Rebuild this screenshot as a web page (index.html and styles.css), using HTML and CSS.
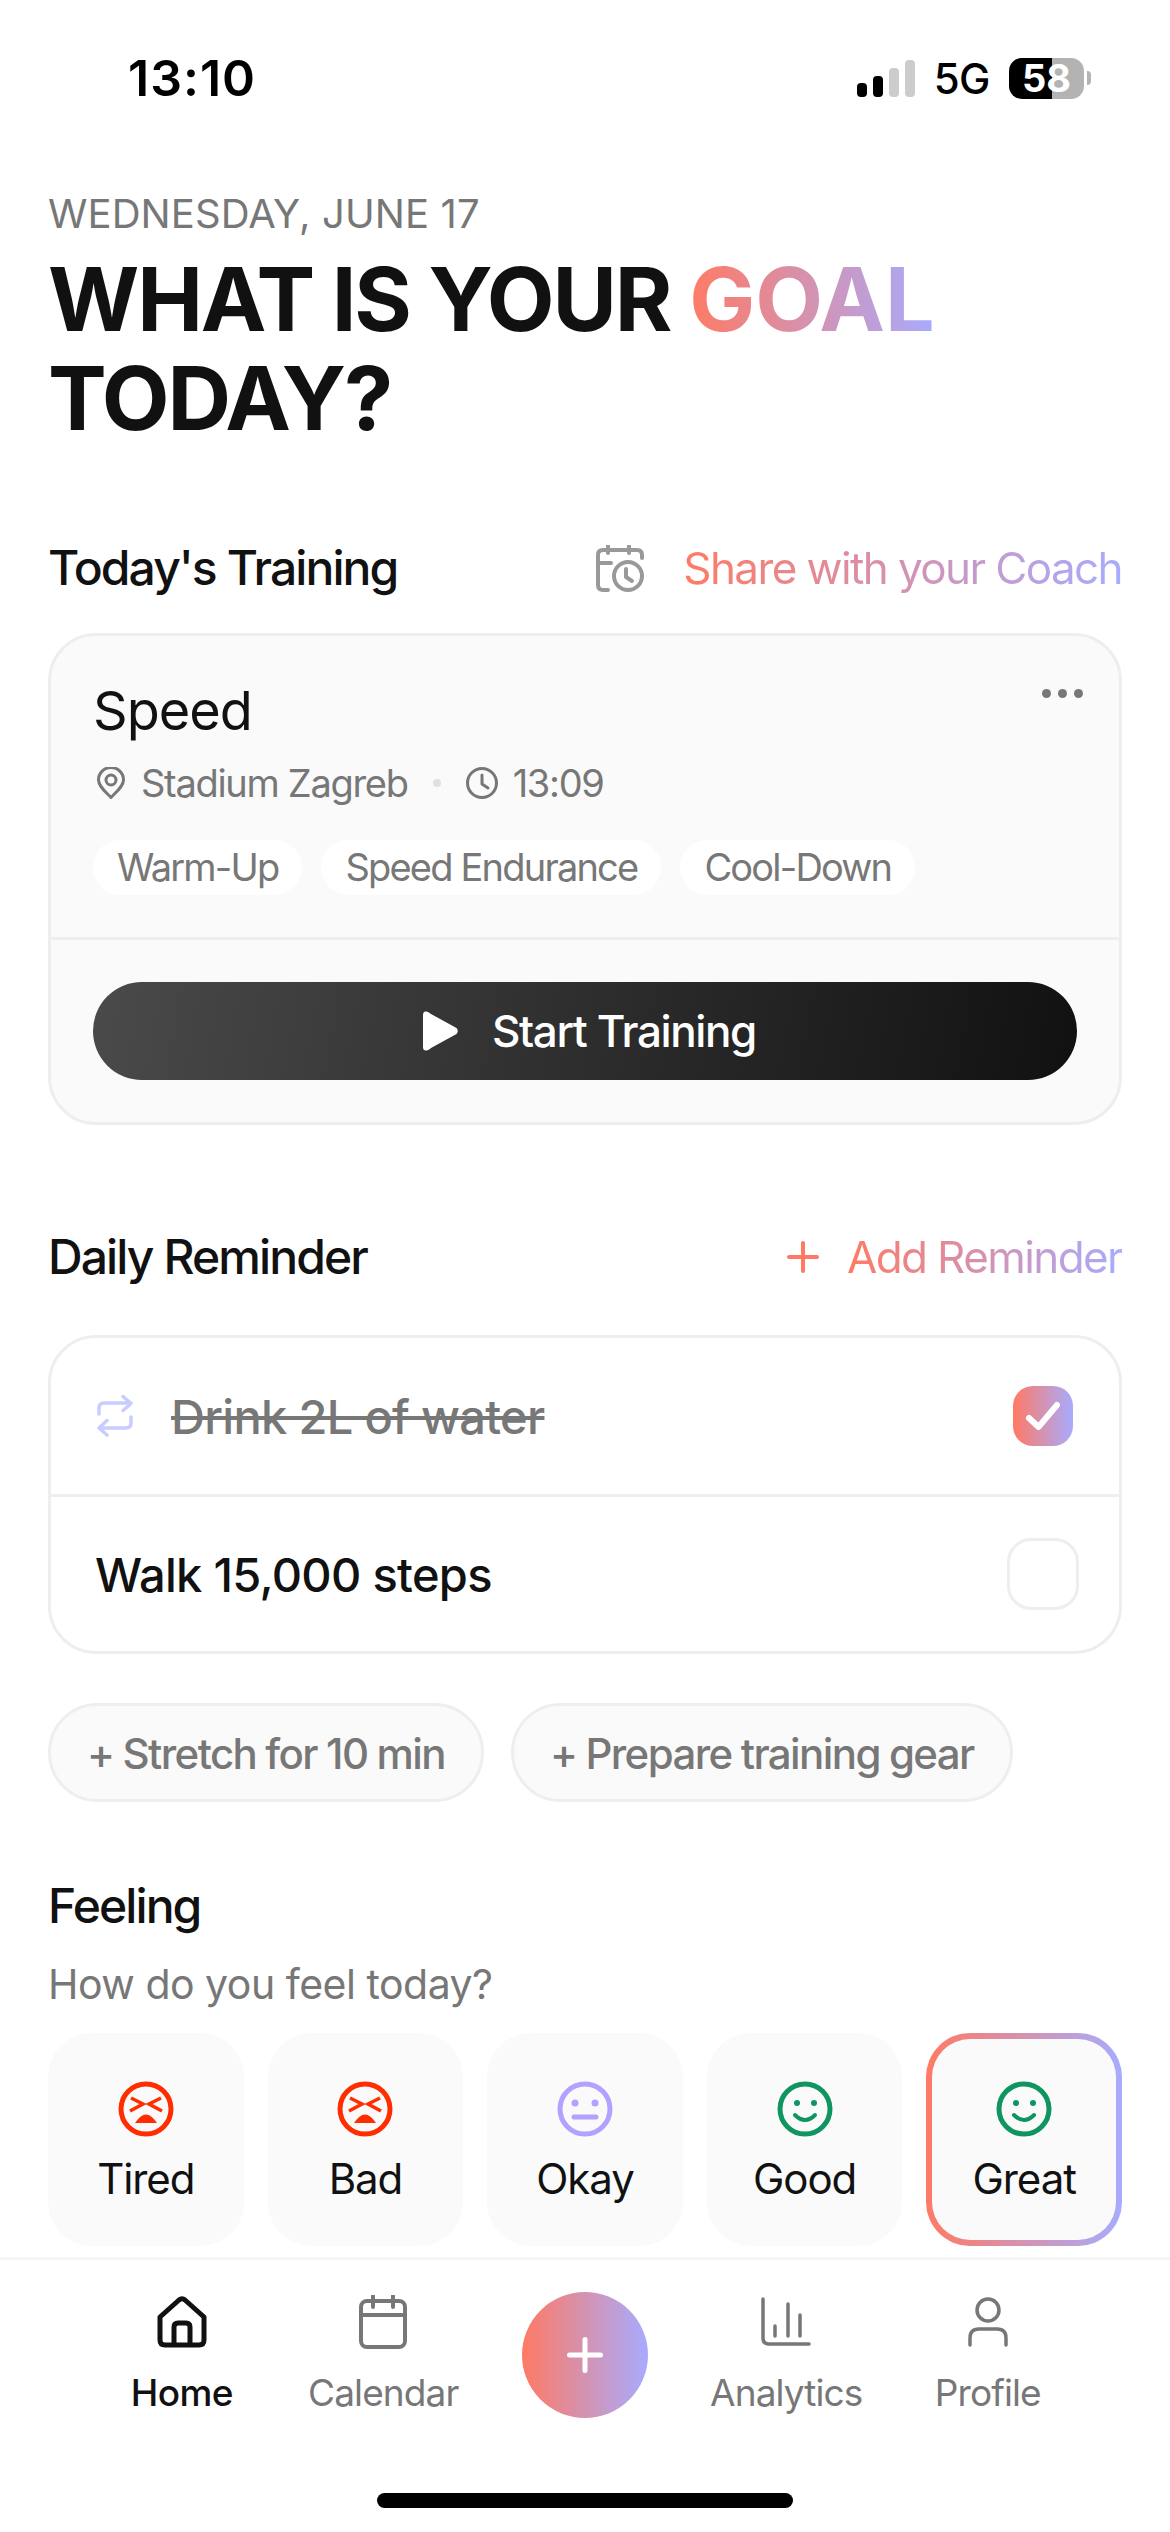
FILE: index.html
```html
<!DOCTYPE html>
<html lang="en">
<head>
	<meta charset="UTF-8">
	<meta name="viewport" content="width=device-width, initial-scale=1.0">
	<title>Home</title>
	<link rel="stylesheet" href="styles.css">
</head>
<body>
	<div class="status">
		<div class="time">13:10</div>
		<div class="status-right">
			<div class="signal">
				<span class="bar bar-1"></span>
				<span class="bar bar-2"></span>
				<span class="bar bar-3"></span>
				<span class="bar bar-4"></span>
			</div>
			<div class="network">5G</div>
			<div class="battery">58</div>
			<div class="battery-nub"></div>
		</div>
	</div>

	<div class="main">
		<div class="date">WEDNESDAY, JUNE 17</div>
		<h1 class="headline">WHAT IS YOUR <span class="grad-text goal">GOAL</span><br>TODAY?</h1>

		<div class="section-head first">
			<h2 class="section-title">Today's Training</h2>
			<div class="section-action">
				<svg class="icon-share" width="48" height="47" viewBox="0 0 48 47" fill="none" stroke="#999" stroke-width="4" stroke-linecap="round" stroke-linejoin="round">
					<path d="M12 45H7Q2 45 2 40V10Q2 5 7 5H41Q46 5 46 10V13"/>
					<path d="M12 1V8M33 1V8M2 18H15"/>
					<circle cx="32" cy="31" r="14"/>
					<path d="M30 24V32L36 36"/>
				</svg>
				<span class="grad-text action-text">Share with your Coach</span>
			</div>
		</div>

		<div class="card training">
			<div class="training-top">
				<div class="training-name">
					<span>Speed</span>
					<div class="dots"><i></i><i></i><i></i></div>
				</div>
				<div class="meta">
					<svg width="28" height="32" viewBox="0 0 28 32" fill="none" stroke="#777" stroke-width="3" stroke-linejoin="round">
						<path d="M14 30.5C9 25 1.5 19.5 1.5 13a12.500 12.500 0 0 1 25 0C26.500 19.500 19 25 14 30.500Z"/>
						<circle cx="14" cy="13" r="5"/>
					</svg>
					<span class="meta-place">Stadium Zagreb</span>
					<span class="meta-dot"></span>
					<svg width="32" height="32" viewBox="0 0 32 32" fill="none" stroke="#777" stroke-width="3" stroke-linecap="round" stroke-linejoin="round">
						<circle cx="16" cy="16" r="14.500"/>
						<path d="M16 8V17L22 21"/>
					</svg>
					<span class="meta-time">13:09</span>
				</div>
				<div class="pills">
					<span class="pill">Warm-Up</span>
					<span class="pill">Speed Endurance</span>
					<span class="pill">Cool-Down</span>
				</div>
			</div>
			<div class="training-bottom">
				<button class="start-btn">
					<svg width="36" height="40" viewBox="0 0 36 40" fill="#fff">
						<path d="M0 4Q0 0 3.500 0.500Q6 1 8 3L33.500 17Q36 20 33.500 23L8 37Q6 39 3.500 39.500Q0 40 0 36Z"/>
					</svg>
					<span>Start Training</span>
				</button>
			</div>
		</div>

		<div class="section-head second">
			<h2 class="section-title">Daily Reminder</h2>
			<div class="section-action">
				<svg class="icon-add" width="32" height="32" viewBox="0 0 32 32" fill="none" stroke="#ff7a64" stroke-width="4" stroke-linecap="round">
					<path d="M16 2V30M2 16H30"/>
				</svg>
				<span class="grad-text action-text">Add Reminder</span>
			</div>
		</div>

		<div class="card reminders">
			<div class="reminder done">
				<svg class="icon-repeat" width="36" height="42" viewBox="0 0 36 42" fill="none" stroke="#c9ccff" stroke-width="3.500" stroke-linecap="round" stroke-linejoin="round">
					<path d="M2 19V13Q2 8 7 8H34M26 1.500L34 8.500L26 15.500"/>
					<path d="M34 22V28Q34 33 29 33H2M10 25.500L2 33L10 40"/>
				</svg>
				<span class="reminder-text">Drink 2L of water</span>
				<div class="check checked">
					<svg width="60" height="60" viewBox="0 0 60 60" fill="none" stroke="#fff" stroke-width="6" stroke-linecap="round" stroke-linejoin="round">
						<path d="M16 32L25.500 41L44 19"/>
					</svg>
				</div>
			</div>
			<div class="reminder">
				<span class="reminder-text">Walk 15,000 steps</span>
				<div class="check"></div>
			</div>
		</div>

		<div class="chips">
			<span class="chip">+ Stretch for 10 min</span>
			<span class="chip">+ Prepare training gear</span>
		</div>

		<h2 class="section-title feeling-title">Feeling</h2>
		<div class="feeling-sub">How do you feel today?</div>

		<div class="moods">
			<div class="mood">
				<svg width="56" height="56" viewBox="0 0 56 56" fill="none" stroke="#ff2d00" stroke-width="5">
					<circle cx="28" cy="28" r="25"/>
					<path stroke-width="3.500" d="M13 17L25 23L12 30M43 17L31 23L44 30"/>
					<path fill="#ff2d00" stroke="none" d="M17 42Q28 25 39 42Z"/>
				</svg>
				<span>Tired</span>
			</div>
			<div class="mood">
				<svg width="56" height="56" viewBox="0 0 56 56" fill="none" stroke="#ff2d00" stroke-width="5">
					<circle cx="28" cy="28" r="25"/>
					<path stroke-width="3.500" d="M13 17L25 23L12 30M43 17L31 23L44 30"/>
					<path fill="#ff2d00" stroke="none" d="M17 42Q28 25 39 42Z"/>
				</svg>
				<span>Bad</span>
			</div>
			<div class="mood">
				<svg width="56" height="56" viewBox="0 0 56 56" fill="none" stroke="#b4a0ff" stroke-width="5" stroke-linecap="round">
					<circle cx="28" cy="28" r="25"/>
					<circle cx="18" cy="22" r="3.500" fill="#b4a0ff" stroke="none"/>
					<circle cx="38" cy="22" r="3.500" fill="#b4a0ff" stroke="none"/>
					<path d="M17 36H39"/>
				</svg>
				<span>Okay</span>
			</div>
			<div class="mood">
				<svg width="56" height="56" viewBox="0 0 56 56" fill="none" stroke="#0e9560" stroke-width="5" stroke-linecap="round">
					<circle cx="28" cy="28" r="25"/>
					<circle cx="20" cy="22" r="3" fill="#0e9560" stroke="none"/>
					<circle cx="37" cy="22" r="3" fill="#0e9560" stroke="none"/>
					<path stroke-width="4" d="M18 34Q28 44 38 34"/>
				</svg>
				<span>Good</span>
			</div>
			<div class="mood selected">
				<svg width="56" height="56" viewBox="0 0 56 56" fill="none" stroke="#0e9560" stroke-width="5" stroke-linecap="round">
					<circle cx="28" cy="28" r="25"/>
					<circle cx="20" cy="22" r="3" fill="#0e9560" stroke="none"/>
					<circle cx="37" cy="22" r="3" fill="#0e9560" stroke="none"/>
					<path stroke-width="4" d="M18 34Q28 44 38 34"/>
				</svg>
				<span>Great</span>
			</div>
		</div>
	</div>

	<div class="nav">
		<div class="nav-items">
			<div class="nav-item active">
				<div class="nav-icon">
					<svg width="50" height="52" viewBox="0 0 50 52" fill="none" stroke="#111" stroke-width="5" stroke-linejoin="round">
						<path d="M3 21L22 4Q25 1.500 28 4L47 21V44Q47 49 42 49H8Q3 49 3 44Z"/>
						<path d="M17 49V31Q17 27 21 27H29Q33 27 33 31V49"/>
					</svg>
				</div>
				<span>Home</span>
			</div>
			<div class="nav-item">
				<div class="nav-icon">
					<svg width="48" height="54" viewBox="0 0 48 54" fill="none" stroke="#777" stroke-width="4" stroke-linecap="round">
						<rect x="2" y="6" width="44" height="46" rx="6"/>
						<path d="M2 20H46M14 1V12M34 1V12"/>
					</svg>
				</div>
				<span>Calendar</span>
			</div>
			<div class="nav-item">
				<div class="fab">
					<svg width="36" height="36" viewBox="0 0 36 36" fill="none" stroke="#fff" stroke-width="5" stroke-linecap="round">
						<path d="M18 2.500V33.500M2.500 18H33.500"/>
					</svg>
				</div>
			</div>
			<div class="nav-item">
				<div class="nav-icon">
					<svg width="50" height="50" viewBox="0 0 50 50" fill="none" stroke="#777" stroke-width="3.500" stroke-linecap="round">
						<path d="M2 2V41Q2 47 8 47H48"/>
						<path d="M14 29V39M27 7V39M39 18V39"/>
					</svg>
				</div>
				<span>Analytics</span>
			</div>
			<div class="nav-item">
				<div class="nav-icon">
					<svg width="40" height="50" viewBox="0 0 40 50" fill="none" stroke="#777" stroke-width="3.500" stroke-linecap="round">
						<circle cx="20" cy="13" r="11"/>
						<path d="M2 48V41Q2 32 11 32H29Q38 32 38 41V48"/>
					</svg>
				</div>
				<span>Profile</span>
			</div>
		</div>
		<div class="home-bar"></div>
	</div>
</body>
</html>
```

FILE: styles.css
```css
* {
	box-sizing: border-box;
}

html, body {
	margin: 0;
	padding: 0;
}

body {
	display: flex;
	flex-direction: column;
	width: 1170px;
	height: 2532px;
	overflow: hidden;
	background-color: #fff;
	color: #111;
	font-family: Inter, "Noto Sans", sans-serif;
}

h1, h2 {
	margin: 0;
	font-weight: 500;
}

svg {
	display: block;
	flex-shrink: 0;
}

.grad-text {
	background: linear-gradient(90deg, #ff7a64, #a8abff);
	-webkit-background-clip: text;
	background-clip: text;
	color: transparent;
}

/* Status bar */
.status {
	display: flex;
	align-items: center;
	justify-content: space-between;
	height: 156px;
	padding: 0 79px 0 128px;
	color: #000;
}

.time {
	font-size: 50px;
	font-weight: 600;
	letter-spacing: 1px;
}

.status-right {
	display: flex;
	align-items: center;
}

.signal {
	display: flex;
	align-items: flex-end;
	gap: 6px;
	height: 37px;
	margin-right: 19px;
}

.bar {
	width: 10px;
	border-radius: 4px;
	background-color: #ccc;
}

.bar-1 {
	height: 14px;
	background-color: #000;
}

.bar-2 {
	height: 21px;
	background-color: #000;
}

.bar-3 {
	height: 29px;
}

.bar-4 {
	height: 37px;
}

.network {
	margin-right: 19px;
	font-size: 42px;
	font-weight: 500;
	letter-spacing: -0.5px;
}

.battery {
	width: 75px;
	height: 41px;
	border-radius: 13px;
	background: linear-gradient(90deg, #000 57%, #b3b3b3 57%);
	color: #fff;
	font-size: 38px;
	font-weight: 700;
	line-height: 41px;
	text-align: center;
}

.battery-nub {
	width: 4px;
	height: 14px;
	margin-left: 3px;
	border-radius: 0 4px 4px 0;
	background-color: #b3b3b3;
}

/* Main column */
.main {
	flex: 1;
	padding: 33px 48px 0;
}

.date {
	height: 50px;
	color: #777;
	font-size: 40px;
	line-height: 50px;
	letter-spacing: 0.1px;
}

.headline {
	margin-top: 11px;
	font-size: 88px;
	font-weight: 700;
	line-height: 99px;
	letter-spacing: -2.15px;
}

.goal {
	letter-spacing: 0;
}

.section-head {
	display: flex;
	align-items: center;
	justify-content: space-between;
	height: 60px;
}

.section-head.first {
	margin-top: 90px;
}

.section-head.second {
	margin-top: 102px;
}

.section-title {
	font-size: 48px;
	line-height: 60px;
	letter-spacing: -1.9px;
}

.section-action {
	display: flex;
	align-items: center;
}

.action-text {
	font-size: 44px;
	line-height: 60px;
	letter-spacing: -1.6px;
}

.icon-share {
	margin-right: 39px;
}

.icon-add {
	margin-right: 28px;
}

.card {
	border: 3px solid #eee;
	border-radius: 48px;
}

/* Training card */
.training {
	height: 492px;
	margin-top: 35px;
	background-color: #fafafa;
}

.training-top {
	height: 304px;
	padding: 43px 42px 0;
	border-bottom: 3px solid #eee;
}

.training-name {
	display: flex;
	justify-content: space-between;
	height: 64px;
	font-size: 54px;
	line-height: 64px;
	letter-spacing: -1px;
}

.dots {
	display: flex;
	gap: 7px;
	height: 9px;
	margin: 10px -6px 0 0;
}

.dots i {
	width: 9px;
	height: 9px;
	border-radius: 50%;
	background-color: #777;
}

.meta {
	display: flex;
	align-items: center;
	height: 46px;
	margin-top: 17px;
	padding-left: 4px;
	color: #777;
	font-size: 38px;
	line-height: 46px;
	letter-spacing: -1.3px;
}

.meta-place {
	margin-left: 16px;
}

.meta-dot {
	width: 8px;
	height: 8px;
	margin: 0 25px;
	border-radius: 50%;
	background-color: #e0e0e0;
}

.meta-time {
	margin-left: 15px;
}

.pills {
	display: flex;
	gap: 19px;
	margin-top: 34px;
}

.pill {
	height: 55px;
	padding: 0 24px;
	border-radius: 28px;
	background-color: #fff;
	color: #777;
	font-size: 38px;
	line-height: 55px;
	letter-spacing: -1.8px;
}

.training-bottom {
	padding: 42px;
}

.start-btn {
	display: flex;
	align-items: center;
	justify-content: center;
	gap: 33px;
	width: 100%;
	height: 98px;
	padding: 0 0 0 9px;
	border: none;
	border-radius: 49px;
	background: linear-gradient(100deg, #4a4a4a, #111);
	color: #fff;
	font-family: inherit;
	font-size: 44px;
	font-weight: 500;
	letter-spacing: -1.4px;
}

/* Reminders */
.reminders {
	margin-top: 48px;
}

.reminder {
	display: flex;
	align-items: center;
	height: 156px;
	padding: 0 40px 0 44px;
	font-size: 47px;
	font-weight: 500;
	letter-spacing: -0.7px;
}

.reminder + .reminder {
	height: 157px;
	border-top: 3px solid #eee;
}

.reminder .check {
	margin-left: auto;
}

.icon-repeat {
	margin-left: 2px;
}

.reminder.done .reminder-text {
	margin-left: 38px;
	color: #777;
	text-decoration: line-through;
}

.check {
	width: 72px;
	height: 72px;
	border: 3px solid #eee;
	border-radius: 24px;
}

.check.checked {
	width: 60px;
	height: 60px;
	margin-right: 6px;
	border: none;
	border-radius: 20px;
	background: linear-gradient(90deg, #ff7a64, #a8abff);
}

.chips {
	display: flex;
	gap: 27px;
	margin-top: 49px;
}

.chip {
	height: 99px;
	padding: 0 36px;
	border: 3px solid #eee;
	border-radius: 50px;
	background-color: #fafafa;
	color: #777;
	font-size: 42px;
	font-weight: 500;
	line-height: 95px;
	letter-spacing: -1.6px;
	word-spacing: -0.5px;
}

/* Feeling */
.feeling-title {
	margin-top: 74px;
}

.feeling-sub {
	height: 46px;
	margin-top: 25px;
	color: #777;
	font-size: 41px;
	line-height: 46px;
	letter-spacing: -0.5px;
}

.moods {
	display: grid;
	grid-template-columns: repeat(5, 1fr);
	gap: 24px;
	margin-top: 26px;
}

.mood {
	display: flex;
	flex-direction: column;
	align-items: center;
	height: 213px;
	padding-top: 48px;
	border-radius: 44px;
	background-color: #fafafa;
	font-size: 42px;
	line-height: 50px;
	letter-spacing: -1.1px;
}

.mood span {
	margin-top: 17px;
}

.mood.selected {
	padding-top: 42px;
	border: 6px solid transparent;
	background: linear-gradient(#fafafa, #fafafa) padding-box, linear-gradient(90deg, #ff7a64, #a8abff) border-box;
}

/* Bottom nav */
.nav {
	display: flex;
	flex-direction: column;
	height: 275px;
	border-top: 3px solid #f5f5f5;
}

.nav-items {
	display: grid;
	grid-template-columns: repeat(5, 201.5px);
	padding: 32px 0 0 81px;
}

.nav-item {
	display: flex;
	flex-direction: column;
	align-items: center;
	color: #777;
	font-size: 37px;
	line-height: 44px;
	letter-spacing: -0.9px;
}

.nav-item.active {
	color: #111;
	font-weight: 500;
	letter-spacing: -0.6px;
}

.nav-icon {
	display: flex;
	align-items: center;
	justify-content: center;
	height: 60px;
	margin-bottom: 19px;
}

.fab {
	display: flex;
	align-items: center;
	justify-content: center;
	width: 126px;
	height: 126px;
	border-radius: 50%;
	background: linear-gradient(90deg, #ff7a64, #a8abff);
}

.home-bar {
	width: 416px;
	height: 15px;
	margin: auto auto 24px;
	border-radius: 8px;
	background-color: #000;
}
```
